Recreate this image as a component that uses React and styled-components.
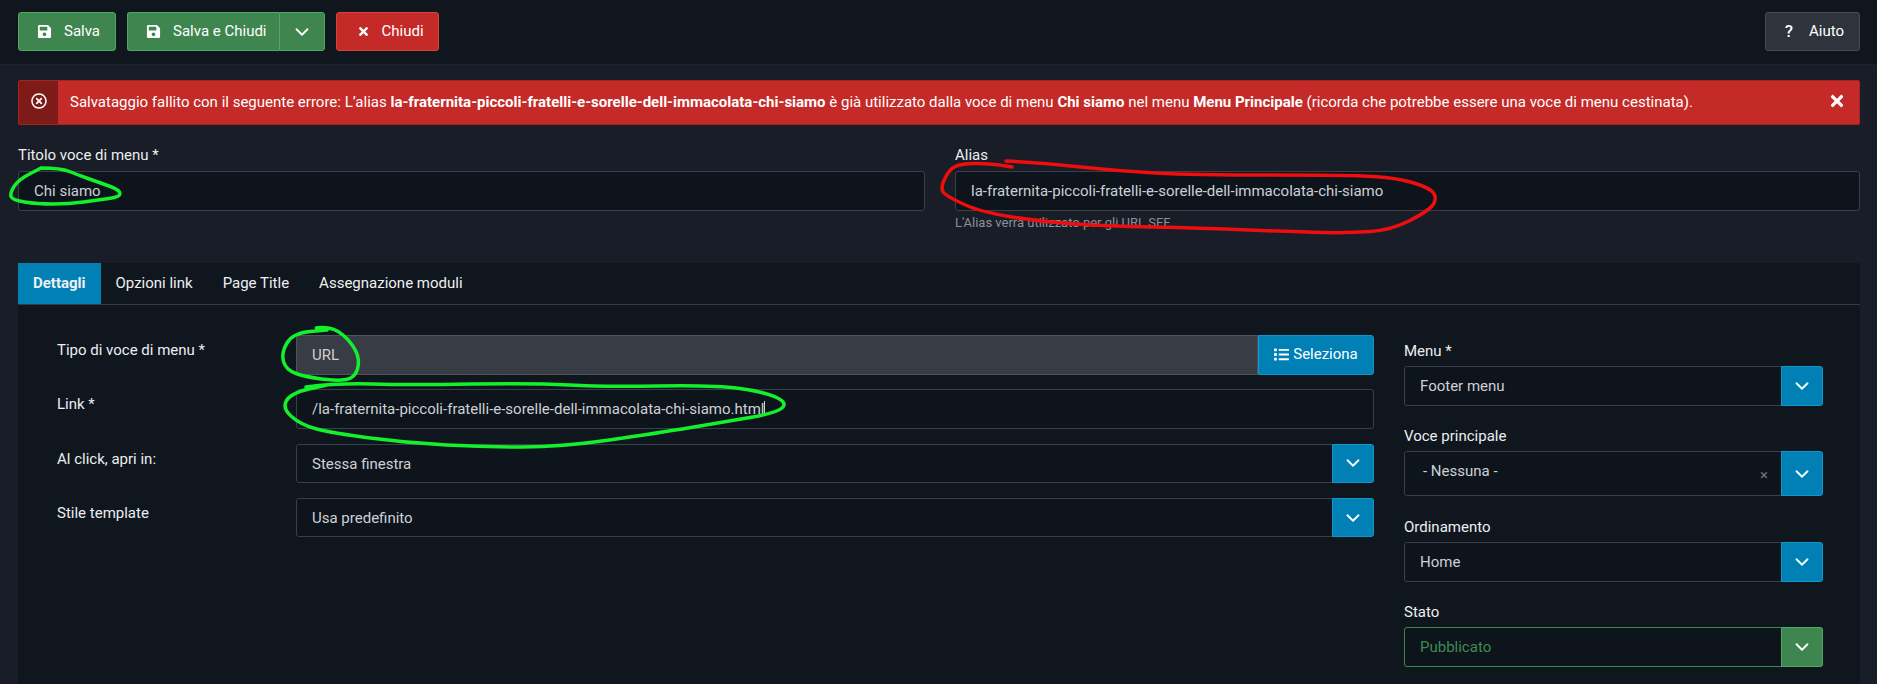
import React from "react";
import styled, { createGlobalStyle } from "styled-components";
import { FaSave, FaTimes, FaList, FaRegTimesCircle } from "react-icons/fa";
import { ChevronDown } from "lucide-react";

const GlobalStyle = createGlobalStyle`
  html, body {
    margin: 0;
    padding: 0;
    background: #181d27;
    overflow: hidden;
  }
  * { box-sizing: border-box; }
`;

const scribbles = [
  {
    color: "#14f02c",
    points: [[41,168],[61,168],[78,175],[98,182],[120,190],[120,197],[98,200],[69,204],[37,204],[12,200],[10,193],[18,180],[41,168]],
  },
  {
    color: "#14f02c",
    points: [[327,330],[309,328],[334,327],[352,343],[360,360],[355,378],[337,381],[306,377],[286,370],[281,353],[293,333],[327,330]],
  },
  {
    color: "#14f02c",
    points: [[306,387],[337,383],[408,385],[536,383],[602,387],[714,385],[765,392],[788,403],[776,413],[724,422],[658,433],[561,447],[485,447],[408,443],[332,433],[301,425],[282,408],[291,393],[327,385]],
  },
  {
    color: "#f00d0d",
    points: [[1006,161],[1043,163],[1118,171],[1193,175],[1349,175],[1398,178],[1430,188],[1437,198],[1430,210],[1392,230],[1349,233],[1299,232],[1199,228],[1106,226],[1043,222],[981,212],[950,198],[940,190],[947,173],[957,164],[987,163],[1012,167]],
  },
];

// midpoint quadratic smoothing so the marker lines look hand drawn
const toPath = (points) => {
  let d = `M${points[0][0]} ${points[0][1]}`;
  for (let i = 1; i < points.length - 1; i++) {
    const mx = (points[i][0] + points[i + 1][0]) / 2;
    const my = (points[i][1] + points[i + 1][1]) / 2;
    d += ` Q${points[i][0]} ${points[i][1]} ${mx} ${my}`;
  }
  const last = points[points.length - 1];
  return `${d} L${last[0]} ${last[1]}`;
};

function App() {
  return (
    <Page>
      <GlobalStyle />
      <Toolbar>
        <Button $tone="green">
          <FaSave size={15} />
          Salva
        </Button>
        <SplitButton>
          <Button $tone="green" $split>
            <FaSave size={15} />
            Salva e Chiudi
          </Button>
          <Caret $tone="green">
            <ChevronDown size={22} strokeWidth={2} />
          </Caret>
        </SplitButton>
        <Button $tone="red" $compact>
          <FaTimes size={13} />
          Chiudi
        </Button>
        <HelpButton>
          <HelpMark>?</HelpMark>
          Aiuto
        </HelpButton>
      </Toolbar>

      <Alert>
        <AlertIcon>
          <FaRegTimesCircle size={16} />
        </AlertIcon>
        <AlertText>
          Salvataggio fallito con il seguente errore: L’alias{" "}
          <b>la-fraternita-piccoli-fratelli-e-sorelle-dell-immacolata-chi-siamo</b> è già
          utilizzato dalla voce di menu <b>Chi siamo</b> nel menu <b>Menu Principale</b>{" "}
          (ricorda che potrebbe essere una voce di menu cestinata).
        </AlertText>
        <AlertClose>
          <FaTimes size={18} />
        </AlertClose>
      </Alert>

      <TitleRow>
        <div>
          <Label>Titolo voce di menu *</Label>
          <Input>Chi siamo</Input>
        </div>
        <div>
          <Label>Alias</Label>
          <Input>la-fraternita-piccoli-fratelli-e-sorelle-dell-immacolata-chi-siamo</Input>
          <Help>L'Alias verrà utilizzato per gli URL SEF.</Help>
        </div>
      </TitleRow>

      <Panel>
        <Tabs>
          <Tab $active>Dettagli</Tab>
          <Tab>Opzioni link</Tab>
          <Tab>Page Title</Tab>
          <Tab>Assegnazione moduli</Tab>
        </Tabs>
        <PanelBody>
          <FormGrid>
            <RowLabel>Tipo di voce di menu *</RowLabel>
            <InputGroup>
              <Input $disabled>URL</Input>
              <SelectButton>
                <FaList size={15} />
                Seleziona
              </SelectButton>
            </InputGroup>

            <RowLabel>Link *</RowLabel>
            <Input>
              /la-fraternita-piccoli-fratelli-e-sorelle-dell-immacolata-chi-siamo.html
              <TextCursor />
            </Input>

            <RowLabel>Al click, apri in:</RowLabel>
            <Select value="Stessa finestra" />

            <RowLabel>Stile template</RowLabel>
            <Select value="Usa predefinito" />
          </FormGrid>

          <Sidebar>
            <SideLabel>Menu *</SideLabel>
            <Select value="Footer menu" />
            <SideLabel>Voce principale</SideLabel>
            <Select value="- Nessuna -" tall clearable />
            <SideLabel>Ordinamento</SideLabel>
            <Select value="Home" />
            <SideLabel>Stato</SideLabel>
            <Select value="Pubblicato" tone="green" />
          </Sidebar>
        </PanelBody>
      </Panel>

      <Scribbles viewBox="0 0 1877 684" width="1877" height="684">
        {scribbles.map((s, i) => (
          <path key={i} d={toPath(s.points)} stroke={s.color} />
        ))}
      </Scribbles>
    </Page>
  );
}

function Select({ value, tone = "blue", tall, clearable }) {
  return (
    <SelectBox $tone={tone} $tall={tall}>
      <SelectValue $tone={tone} $tall={tall}>
        {value}
      </SelectValue>
      {clearable && <Clear>×</Clear>}
      <SelectArrow $tone={tone}>
        <ChevronDown size={22} strokeWidth={2} />
      </SelectArrow>
    </SelectBox>
  );
}

export default App;

const tones = {
  green: { bg: "#3f854f", border: "#4da860" },
  red: { bg: "#c42a27", border: "#d8413c" },
  blue: { bg: "#0080b5", border: "#0f96cd" },
};

const Page = styled.div`
  position: relative;
  width: 1877px;
  height: 684px;
  overflow: hidden;
  font-family: Roboto, "Liberation Sans", sans-serif;
  font-size: 15px;
  line-height: 21px;
  color: #e6e8eb;
`;

const Toolbar = styled.div`
  display: flex;
  align-items: center;
  gap: 11px;
  height: 65px;
  padding: 0 17px 1px 18px;
  background: #0f161e;
  border-bottom: 1px solid #1d222b;
`;

const Button = styled.div`
  display: flex;
  align-items: center;
  gap: 12px;
  height: 39px;
  padding: ${(p) => (p.$compact ? "0 14px 0 20px" : p.$split ? "0 12px 0 18px" : "0 15px 0 18px")};
  background: ${(p) => tones[p.$tone].bg};
  border: 1px solid ${(p) => tones[p.$tone].border};
  border-radius: ${(p) => (p.$split ? "3px 0 0 3px" : "3px")};
  border-right: ${(p) => (p.$split ? "none" : "")};
  color: #fff;
`;

const SplitButton = styled.div`
  display: flex;
`;

const Caret = styled.div`
  display: flex;
  align-items: center;
  justify-content: center;
  width: 46px;
  height: 39px;
  background: ${(p) => tones[p.$tone].bg};
  border: 1px solid ${(p) => tones[p.$tone].border};
  border-radius: 0 3px 3px 0;
  color: #fff;
`;

const HelpButton = styled.div`
  display: flex;
  align-items: center;
  gap: 16px;
  height: 39px;
  margin-left: auto;
  padding: 0 15px 0 19px;
  background: #2f343c;
  border: 1px solid #454a52;
  border-radius: 3px;
  color: #fff;
`;

const HelpMark = styled.span`
  font-size: 17px;
  font-weight: 500;
`;

const Alert = styled.div`
  display: flex;
  align-items: stretch;
  height: 45px;
  margin: 15px 17px 0 18px;
  background: #c42a27;
  border: 1px solid #a82320;
  border-radius: 2px;
  color: #fff;
`;

const AlertIcon = styled.div`
  display: flex;
  align-items: flex-start;
  justify-content: center;
  flex: 0 0 39px;
  padding-top: 12px;
  background: #7e1b18;
`;

const AlertText = styled.div`
  flex: 1;
  align-self: center;
  padding-left: 12px;
  white-space: nowrap;
`;

const AlertClose = styled.div`
  display: flex;
  align-items: center;
  padding: 0 13px 4px 0;
`;

const TitleRow = styled.div`
  display: grid;
  grid-template-columns: 907px 905px;
  column-gap: 30px;
  height: 118px;
  margin: 20px 17px 0 18px;
`;

const Label = styled.div`
  margin-bottom: 5px;
  color: #eceef0;
`;

const SideLabel = styled.div`
  margin-bottom: 4px;
  color: #eceef0;
`;

const Input = styled.div`
  flex: 1;
  height: 40px;
  padding: 0 15px;
  background: ${(p) => (p.$disabled ? "#383c45" : "#0e141c")};
  border: 1px solid ${(p) => (p.$disabled ? "#50545c" : "#3a3f48")};
  border-radius: ${(p) => (p.$disabled ? "3px 0 0 3px" : "3px")};
  line-height: 38px;
  color: #cdd0d4;
  white-space: nowrap;
`;

const TextCursor = styled.span`
  display: inline-block;
  width: 1px;
  height: 15px;
  vertical-align: -2px;
  background: #cdd0d4;
`;

const Help = styled.div`
  margin-top: 1px;
  font-size: 13px;
  color: #8b9098;
`;

const Panel = styled.div`
  height: 430px;
  margin: 0 17px 0 18px;
  background: #0f161e;
`;

const Tabs = styled.div`
  display: flex;
  height: 42px;
  border-bottom: 1px solid #363b43;
`;

const Tab = styled.div`
  height: 41px;
  padding: 0 15px;
  background: ${(p) => (p.$active ? "#0080b5" : "transparent")};
  font-weight: ${(p) => (p.$active ? 700 : 400)};
  line-height: 40px;
  color: #eef0f2;
`;

const PanelBody = styled.div`
  display: flex;
  gap: 30px;
  padding: 30px 37px 0 39px;
`;

const FormGrid = styled.div`
  display: grid;
  grid-template-columns: 239px 1078px;
  grid-auto-rows: 39.5px;
  row-gap: 14.8px;
  align-content: start;
  & > div {
    height: 39.5px;
  }
`;

const RowLabel = styled.div`
  padding-top: 5px;
  color: #eceef0;
`;

const InputGroup = styled.div`
  display: flex;
`;

const SelectButton = styled.div`
  display: flex;
  align-items: center;
  justify-content: center;
  gap: 4px;
  flex: 0 0 116px;
  background: #0080b5;
  border: 1px solid #0f96cd;
  border-radius: 0 3px 3px 0;
  color: #fff;
`;

const Sidebar = styled.div`
  display: flex;
  flex-direction: column;
  width: 419px;
  padding-top: 6px;
  ${SideLabel}:not(:first-child) {
    margin-top: 20.8px;
  }
`;

const SelectBox = styled.div`
  display: flex;
  align-items: stretch;
  position: relative;
  flex: 0 0 auto;
  height: ${(p) => (p.$tall ? "45px" : "39.5px")};
  background: #0e141c;
  border: 1px solid ${(p) => (p.$tone === "green" ? "#3f854f" : "#3a3f48")};
  border-radius: 3px;
`;

const SelectValue = styled.div`
  flex: 1;
  padding-left: ${(p) => (p.$tall ? "18px" : "15px")};
  line-height: 38px;
  color: ${(p) => (p.$tone === "green" ? "#3f8a50" : "#cdd0d4")};
`;

const Clear = styled.span`
  position: absolute;
  right: 54px;
  top: 13px;
  font-size: 15px;
  color: #6d7179;
`;

const SelectArrow = styled.div`
  display: flex;
  align-items: center;
  justify-content: center;
  flex: 0 0 42px;
  margin: -1px -1px -1px 0;
  background: ${(p) => tones[p.$tone].bg};
  border: 1px solid ${(p) => tones[p.$tone].border};
  border-radius: 0 3px 3px 0;
  color: #fff;
`;

const Scribbles = styled.svg`
  position: absolute;
  left: 0;
  top: 0;
  pointer-events: none;
  path {
    fill: none;
    stroke-width: 3.5;
    stroke-linecap: round;
    stroke-linejoin: round;
  }
`;
